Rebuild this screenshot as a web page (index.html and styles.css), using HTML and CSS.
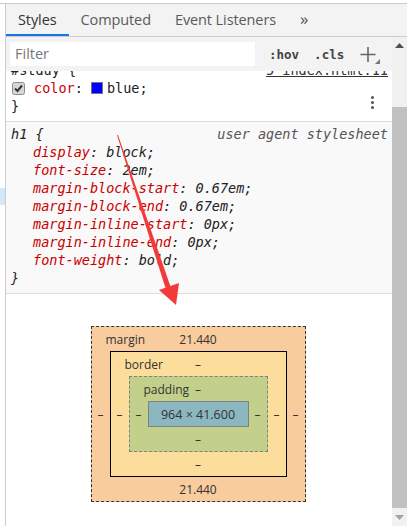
FILE: index.html
```html
<!DOCTYPE html>
<html>
<head>
<meta charset="utf-8">
<link rel="stylesheet" href="styles.css">
</head>
<body>
<div class="page">
  <div class="gutter"><div class="gutter-hl"></div></div>
  <div class="panel">
    <div class="tabs">
      <div class="tab active">Styles</div>
      <div class="tab">Computed</div>
      <div class="tab">Event Listeners</div>
      <div class="tab more">&raquo;</div>
    </div>
    <div class="body">
      <div class="main">
        <div class="toolbar">
          <div class="filter">Filter</div>
          <span class="tool">:hov</span>
          <span class="tool">.cls</span>
          <span class="plus">
            <svg width="22" height="22" viewBox="0 0 22 22"><path d="M9 2v15M1.5 9.5h15" stroke="#666" stroke-width="1.6" fill="none"/><path d="M21 14v5h-5z" fill="#777"/></svg>
          </span>
        </div>
        <div class="rules">
          <div class="rule rule-first">
            <div class="line head"><span class="sel">#stduy {</span><span class="src">5 index.html:11</span></div>
            <div class="line"><span class="cb"><svg width="13" height="13" viewBox="0 0 13 13"><rect x="0.5" y="0.5" width="12" height="12" rx="2" fill="#d6d6d6" stroke="#8a8a8a"/><path d="M3 6.5l2.5 2.5 4.5-5.5" stroke="#333" stroke-width="2" fill="none"/></svg></span><span class="prop">color</span>: <span class="swatch"></span>blue;</div>
            <div class="line">}</div>
            <div class="dots"><i></i><i></i><i></i></div>
          </div>
          <div class="rule ua">
            <div class="line head"><span class="sel">h1 {</span><span class="src ua-src">user agent stylesheet</span></div>
            <div class="line ind"><span class="prop">display</span>: block;</div>
            <div class="line ind"><span class="prop">font-size</span>: 2em;</div>
            <div class="line ind"><span class="prop">margin-block-start</span>: 0.67em;</div>
            <div class="line ind"><span class="prop">margin-block-end</span>: 0.67em;</div>
            <div class="line ind"><span class="prop">margin-inline-start</span>: 0px;</div>
            <div class="line ind"><span class="prop">margin-inline-end</span>: 0px;</div>
            <div class="line ind"><span class="prop">font-weight</span>: bold;</div>
            <div class="line">}</div>
          </div>
          <div class="metrics">
            <div class="bx margin">
              <div class="top"><span class="lbl">margin</span><span>21.440</span><span></span></div>
              <div class="side">&ndash;</div>
              <div class="bx border">
                <div class="top"><span class="lbl">border</span><span>&ndash;</span><span></span></div>
                <div class="side">&ndash;</div>
                <div class="bx padding">
                  <div class="top"><span class="lbl">padding</span><span>&ndash;</span><span></span></div>
                  <div class="side">&ndash;</div>
                  <div class="content">964 × 41.600</div>
                  <div class="side">&ndash;</div>
                  <div class="bottom">&ndash;</div>
                </div>
                <div class="side">&ndash;</div>
                <div class="bottom">&ndash;</div>
              </div>
              <div class="side">&ndash;</div>
              <div class="bottom">21.440</div>
            </div>
          </div>
        </div>
      </div>
      <div class="scrollbar">
        <div class="sb-btn"><svg width="9" height="5" viewBox="0 0 9 5"><path d="M0 5L4.5 0 9 5z" fill="#505050"/></svg></div>
        <div class="sb-track"><div class="sb-thumb"></div></div>
        <div class="sb-btn"><svg width="9" height="5" viewBox="0 0 9 5"><path d="M0 0h9L4.5 5z" fill="#a3a3a3"/></svg></div>
      </div>
    </div>
  </div>
</div>
<svg class="annot" width="407" height="526" viewBox="0 0 407 526">
  <polygon points="117,135 118,135 170.5,286.5 165.5,288" fill="#f23a3a"/>
  <polygon points="159,290 179,283 176,305" fill="#f23a3a"/>
</svg>
</body>
</html>
```
FILE: styles.css
```css
* { box-sizing: border-box; }
html, body { margin: 0; padding: 0; background: #fff; }
body {
  width: 407px;
  height: 526px;
  overflow: hidden;
  position: relative;
  font-family: "Open Sans", "Noto Sans", sans-serif;
  color: #333;
}
.page {
  margin-top: 3px;
  border-top: 1px solid #cccccc;
  height: 523px;
  display: flex;
}
.gutter {
  width: 6px;
  border-right: 1px solid #cccccc;
  padding-top: 184px;
}
.gutter-hl { height: 17px; background: #d4e6fa; width: 5px; }
.panel { flex: 1; display: flex; flex-direction: column; min-width: 0; }
.tabs {
  height: 33px;
  border-bottom: 1px solid #cccccc;
  background: #f3f3f3;
  display: flex;
  align-items: stretch;
}
.tab {
  padding: 0 12px;
  font-size: 14.5px;
  color: #5a5a5a;
  display: flex;
  align-items: center;
  padding-top: 1px;
  border-bottom: 2px solid transparent;
  letter-spacing: -0.1px;
}
.tab.active { color: #333; border-bottom-color: #1a73e8; }
.tab.more { font-size: 17px; color: #555; padding-left: 12px; padding-bottom: 3px; }
.body { flex: 1; display: flex; min-height: 0; }
.main { flex: 1; display: flex; flex-direction: column; min-width: 0; }
.toolbar {
  height: 34px;
  background: #f3f3f3;
  display: flex;
  align-items: center;
  padding: 0 0 0 4px;
}
.filter {
  width: 245px;
  height: 24px;
  background: #fff;
  font-size: 14.5px;
  color: #777;
  padding-left: 5px;
  line-height: 24px;
}
.tool {
  font-family: "DejaVu Sans Mono", monospace;
  font-weight: bold;
  font-size: 12.5px;
  color: #444;
  margin-left: 14px;
}
.tool + .tool { margin-left: 15px; }
.plus { margin-left: 15px; display: flex; padding-top: 3px; }
.rules {
  flex: 1;
  overflow: hidden;
  font-family: "DejaVu Sans Mono", monospace;
  font-size: 13.5px;
  color: #222;
}
.rule {
  position: relative;
  border-bottom: 1px solid #dddddd;
  padding: 3px 4px 6px 5px;
}
.rule-first { margin-top: -13px; background: #fff; }
.line { height: 18px; line-height: 19px; white-space: pre; }
.head { display: flex; justify-content: space-between; }
.src { text-decoration: underline; color: #333; }
.ua { background: #f9f9f9; font-style: italic; }
.ua-src { text-decoration: none; color: #555; }
.ind { padding-left: 22px; }
.prop { color: #c80000; }
.cb { display: inline-block; width: 23px; vertical-align: -2px; padding-left: 1px; }
.cb svg { display: block; }
.swatch {
  display: inline-block;
  width: 12px;
  height: 12px;
  background: #0000ff;
  border: 1px solid #777;
  vertical-align: -1px;
  margin-right: 4px;
}
.dots {
  position: absolute;
  right: 18px;
  top: 38px;
  display: flex;
  flex-direction: column;
  gap: 2px;
}
.dots i { width: 3px; height: 3px; border-radius: 50%; background: #555; display: block; }
.metrics {
  display: flex;
  justify-content: center;
  padding-top: 32px;
  padding-right: 2px;
  font-family: "Open Sans", "Noto Sans", sans-serif;
  font-size: 12px;
  color: #333;
}
.bx {
  display: grid;
  grid-template-columns: 18px auto 18px;
  grid-template-rows: 24px auto 24px;
  text-align: center;
}
.bx .top {
  grid-column: 1 / 4;
  display: grid;
  grid-template-columns: 1fr auto 1fr;
  align-items: center;
}
.bx .top .lbl { text-align: left; padding-left: 14px; white-space: nowrap; }
.bx .bottom { grid-column: 1 / 4; display: flex; align-items: center; justify-content: center; }
.side { display: flex; align-items: center; justify-content: center; }
.margin { background: #f9cc9d; border: 1px dashed #333; }
.border { background: #fddd9b; border: 1px solid #000; }
.padding { background: #c3d08b; border: 1px dashed #808080; }
.content {
  width: 101px;
  height: 26px;
  background: #8cb6c0;
  border: 1px solid #808080;
  display: flex;
  align-items: center;
  justify-content: center;
  font-size: 12.5px;
}
.scrollbar {
  width: 15px;
  background: #f1f1f1;
  display: flex;
  flex-direction: column;
}
.sb-btn { height: 17px; display: flex; align-items: center; justify-content: center; }
.sb-track { flex: 1; padding-top: 53px; padding-bottom: 1px; display: flex; flex-direction: column; }
.sb-thumb { flex: 1; background: #c1c1c1; }
.annot { position: absolute; left: 0; top: 0; pointer-events: none; }
```
